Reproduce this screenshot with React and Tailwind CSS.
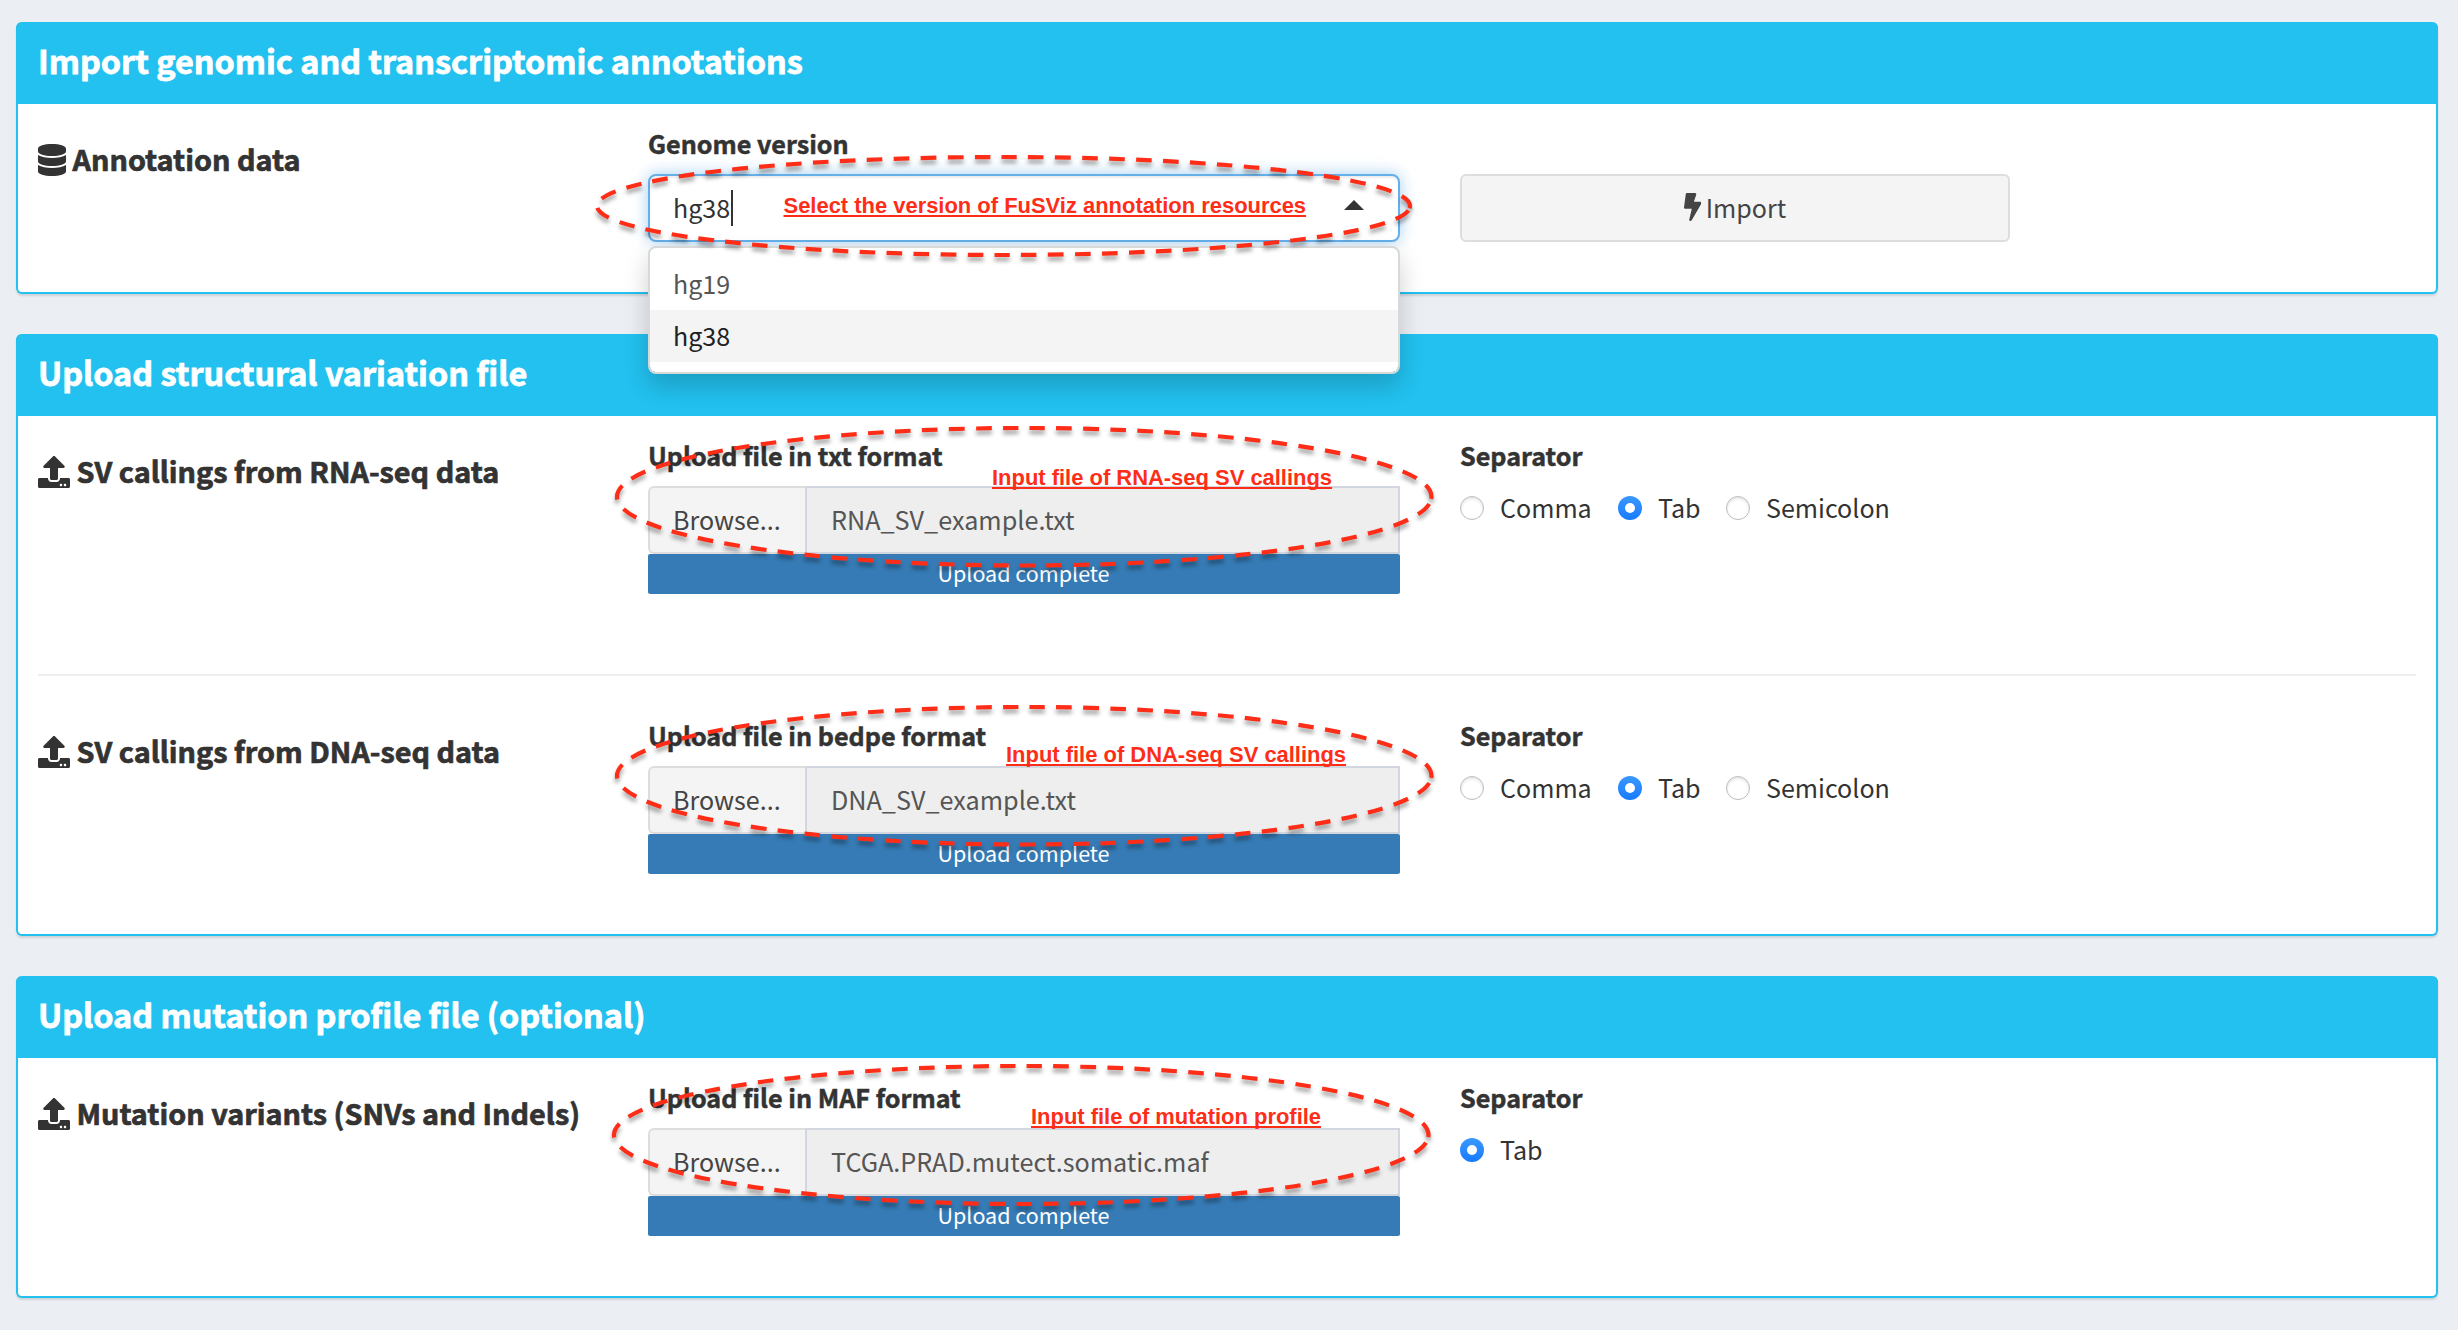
import { FaBolt, FaDatabase, FaUpload } from "react-icons/fa";

function Panel({ title, children, className = "" }) {
  return (
    <section className={`rounded-[6px] border-2 border-t-0 border-[#22c1ef] bg-white shadow-[0_2px_2px_rgba(0,0,0,0.12)] ${className}`}>
      <header className="-mx-0.5 h-[82px] rounded-t-[6px] bg-[#22c1ef] px-[22px] pt-[20px]">
        <h3 className="text-[32.4px] leading-[36px] font-bold text-white [-webkit-text-stroke:0.8px_white]">{title}</h3>
      </header>
      <div className="px-5">{children}</div>
    </section>
  );
}

function RowTitle({ icon: Icon, iconClass, children }) {
  return (
    <div className="mt-5 flex h-8 w-[610px] shrink-0 items-center gap-[6.5px]">
      <Icon className={`shrink-0 ${iconClass}`} />
      <h4 className="-translate-y-px text-[28.8px] leading-8 font-bold whitespace-nowrap [-webkit-text-stroke:0.7px_#333]">{children}</h4>
    </div>
  );
}

function Label({ children }) {
  return <div className="-mt-px mb-[11px] h-10 text-[25.15px] leading-10 font-bold [-webkit-text-stroke:0.5px_#333]">{children}</div>;
}

/* Call-out: a dashed ellipse drawn counter-clockwise from just below its right end. */
function Callout({ width, height, className }) {
  const rx = width / 2 - 2;
  const ry = height / 2 - 2;
  const cx = width / 2;
  const cy = height / 2;
  const sx = cx + rx * Math.sqrt(1 - (2.2 / ry) ** 2);
  const sy = cy + 2.2;
  return (
    <svg
      width={width}
      height={height}
      className={`pointer-events-none absolute z-20 max-w-none overflow-visible drop-shadow-[0_4px_2px_rgba(0,0,0,0.38)] ${className}`}
    >
      <path
        d={`M${sx} ${sy}A${rx} ${ry} 0 0 0 ${cx} ${cy - ry}A${rx} ${ry} 0 0 0 ${cx - rx} ${cy}A${rx} ${ry} 0 0 0 ${cx} ${cy + ry}A${rx} ${ry} 0 0 0 ${sx} ${sy}`}
        fill="none"
        stroke="#fe2d17"
        strokeWidth="4.2"
        strokeDasharray="15.6 11.33"
      />
    </svg>
  );
}

function Note({ className, children }) {
  return (
    <span
      className={`absolute z-20 font-['Liberation_Sans',sans-serif] text-[21.95px] leading-[26px] font-bold whitespace-nowrap text-[#fe2d17] underline decoration-2 underline-offset-2 [text-decoration-skip-ink:none] ${className}`}
    >
      {children}
    </span>
  );
}

function FileField({ label, file, note, noteClass, calloutClass, calloutHeight }) {
  return (
    <div className="relative mr-[60px] w-[752px] shrink-0">
      <Label>{label}</Label>
      <div className="flex h-[68px] text-[25.07px]">
        <div className="w-[157px] rounded-l-[6px] border-2 border-r-0 border-[#ddd] bg-[#f4f4f4] pl-[23px] leading-[62px] text-[#444]">Browse...</div>
        <div className="flex-1 border-2 border-[#d2d6de] bg-[#eee] pl-6 text-[25.2px] leading-[62px] text-[#555]">{file}</div>
      </div>
      <div className="h-10 rounded-[2px] bg-[#367bb5] pr-px text-center text-[21.5px] leading-[38px] text-white">Upload complete</div>
      <Callout width={818.5} height={calloutHeight} className={calloutClass} />
      <Note className={noteClass}>{note}</Note>
    </div>
  );
}

function Radio({ checked, children }) {
  return (
    <label className="flex items-center gap-4">
      {checked ? (
        <span className="flex size-6 items-center justify-center rounded-full bg-linear-to-b from-[#3b98fe] to-[#147afe]">
          <span className="size-2.5 rounded-full bg-white" />
        </span>
      ) : (
        <span className="size-6 rounded-full border border-[#bcbcbc] bg-white shadow-[inset_0_2px_3px_rgba(0,0,0,0.1)]" />
      )}
      <span className="-translate-y-px">{children}</span>
    </label>
  );
}

function Separator({ options }) {
  return (
    <div className="w-[550px]">
      <Label>Separator</Label>
      <div className="-mt-[8px] flex h-[60px] items-center text-[25.07px] leading-10">
        {options.map((o) => (
          <div key={o} className={o === "Comma" ? "w-[158px]" : o === "Tab" ? "w-[108px]" : ""}>
            <Radio checked={o === "Tab"}>{o}</Radio>
          </div>
        ))}
      </div>
    </div>
  );
}

const ALL = ["Comma", "Tab", "Semicolon"];

export default function App() {
  return (
    <main className="flex h-[1330px] w-[2458px] flex-col gap-10 bg-[#ebeff4] pt-[22px] pr-5 pl-4 font-['Noto_Sans_CJK_SC',sans-serif] text-[#333]">
      <Panel title="Import genomic and transcriptomic annotations" className="h-[272px]">
        <div className="flex pt-5">
          <RowTitle icon={FaDatabase} iconClass="h-8 w-7">Annotation data</RowTitle>
          <div className="relative mr-[60px] w-[752px] shrink-0">
            <Label>Genome version</Label>
            <div className="flex h-[68px] items-center rounded-lg border-2 border-[#66afe9] bg-white pr-[34px] pl-[23px] text-[25.07px] shadow-[inset_0_2px_2px_rgba(0,0,0,0.075),0_0_16px_rgba(102,175,233,0.6)]">
              <span className="-translate-y-px leading-9">hg38</span>
              <span className="ml-px h-9 w-0.5 bg-[#333]" />
              <svg width="20" height="10" viewBox="0 0 20 10" className="mb-1.5 ml-auto fill-[#333]">
                <path d="M10 0 20 10H0Z" />
              </svg>
            </div>
            <div className="absolute top-[122px] z-10 h-32 w-full rounded-lg border-2 border-[#d8d8d8] bg-white bg-clip-padding pt-2.5 text-[25.07px] shadow-[0_12px_24px_rgba(0,0,0,0.19)]">
              <div className="h-[52px] pl-[23px] leading-[50px] text-[#555]">hg19</div>
              <div className="h-[52px] bg-[#f4f4f4] pl-[23px] leading-[50px] text-[#222]">hg38</div>
            </div>
            <Callout width={817} height={102} className="top-[31px] -left-[53px]" />
            <Note className="top-[69px] left-[135.5px]">Select the version of FuSViz annotation resources</Note>
          </div>
          <button className="mt-[50px] flex h-[68px] w-[550px] items-center justify-center gap-[4.5px] rounded-[6px] border-2 border-[#ddd] bg-[#f4f4f4] text-[25.07px] text-[#444]">
            <FaBolt className="h-7 w-[17.5px] -translate-y-px" />
            <span className="-translate-y-px leading-9">Import</span>
          </button>
        </div>
      </Panel>

      <Panel title="Upload structural variation file" className="h-[602px]">
        <div className="flex h-[258px] pt-5">
          <RowTitle icon={FaUpload} iconClass="size-8">SV callings from RNA-seq data</RowTitle>
          <FileField
            label="Upload file in txt format"
            file="RNA_SV_example.txt"
            note="Input file of RNA-seq SV callings"
            noteClass="top-[29px] left-[344px]"
            calloutClass="-top-[10px] -left-[33px]"
            calloutHeight={141.5}
          />
          <Separator options={ALL} />
        </div>
        <hr className="border-t-2 border-[#eee]" />
        <div className="flex pt-10">
          <RowTitle icon={FaUpload} iconClass="size-8">SV callings from DNA-seq data</RowTitle>
          <FileField
            label="Upload file in bedpe format"
            file="DNA_SV_example.txt"
            note="Input file of DNA-seq SV callings"
            noteClass="top-[26px] left-[358px]"
            calloutClass="-top-[11px] -left-[33px]"
            calloutHeight={141.5}
          />
          <Separator options={ALL} />
        </div>
      </Panel>

      <Panel title="Upload mutation profile file (optional)" className="h-[322px]">
        <div className="flex pt-5">
          <RowTitle icon={FaUpload} iconClass="size-8">Mutation variants (SNVs and Indels)</RowTitle>
          <FileField
            label="Upload file in MAF format"
            file="TCGA.PRAD.mutect.somatic.maf"
            note="Input file of mutation profile"
            noteClass="top-[26px] left-[383px]"
            calloutClass="-top-[14px] -left-[36.5px]"
            calloutHeight={142}
          />
          <Separator options={["Tab"]} />
        </div>
      </Panel>
    </main>
  );
}
